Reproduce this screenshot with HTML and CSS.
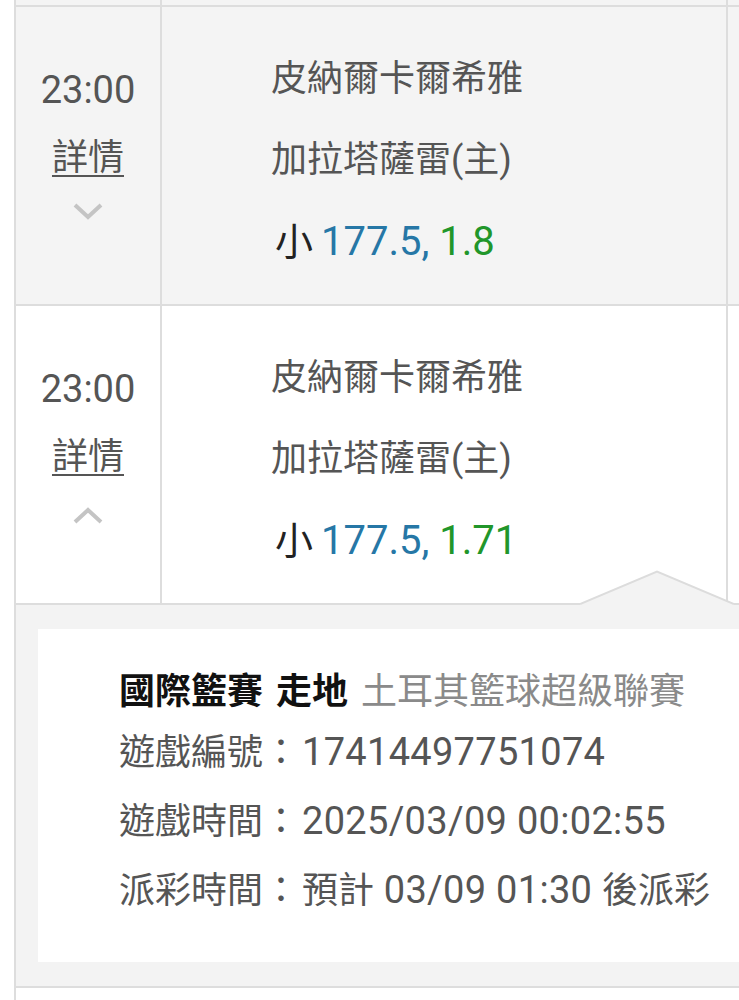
FILE: index.html
```html
<!DOCTYPE html>
<html lang="zh-Hant">
<head>
<meta charset="utf-8">
<title>注單</title>
<link rel="stylesheet" href="styles.css">
</head>
<body>
<div class="board">
  <div class="row stub">
    <div class="c time"></div><div class="c main"></div><div class="c extra"></div>
  </div>
  <div class="row alt">
    <div class="c time">
      <div class="clock">23:00</div>
      <a class="detail">詳情</a>
      <svg class="chev" width="32" height="20" viewBox="0 0 32 20"><polyline points="3,4 16,16 29,4" fill="none" stroke="#c4c4c4" stroke-width="4"/></svg>
    </div>
    <div class="c main">
      <div class="team">皮納爾卡爾希雅</div>
      <div class="team">加拉塔薩雷(主)</div>
      <div class="odds"><span class="pick">小</span><span class="n line">177.5,</span><span class="n"> </span><span class="n price">1.8</span></div>
    </div>
    <div class="c extra"></div>
  </div>
  <div class="row">
    <div class="c time">
      <div class="clock">23:00</div>
      <a class="detail">詳情</a>
      <svg class="chev up" width="32" height="20" viewBox="0 0 32 20"><polyline points="3,16 16,4 29,16" fill="none" stroke="#c4c4c4" stroke-width="4"/></svg>
    </div>
    <div class="c main">
      <div class="team">皮納爾卡爾希雅</div>
      <div class="team">加拉塔薩雷(主)</div>
      <div class="odds"><span class="pick">小</span><span class="n line">177.5,</span><span class="n"> </span><span class="n price">1.71</span></div>
    </div>
    <div class="c extra"></div>
  </div>
  <div class="panel">
    <svg class="notch" width="154" height="36" viewBox="0 0 154 36"><polygon points="0,34 77,1.5 154,34 154,36 0,36" fill="#f3f3f3"/><polyline points="0,34 77,1.5 154,34" fill="none" stroke="#dcdcdc" stroke-width="2"/></svg>
    <div class="card">
      <div class="head"><b>國際籃賽 走地</b> <span class="league">土耳其籃球超級聯賽</span></div>
      <div class="info">遊戲編號：<span class="n">17414497751074</span></div>
      <div class="info">遊戲時間：<span class="n">2025/03/09 00:02:55</span></div>
      <div class="info">派彩時間：<span class="after">預計</span><span class="n"> 03/09 01:30 </span>後派彩</div>
    </div>
  </div>
  <div class="tail"></div>
</div>
</body>
</html>
```

FILE: styles.css
```css
html, body {
  margin: 0;
  padding: 0;
  background: #ffffff;
  overflow: hidden;
}
body {
  width: 739px;
  height: 1000px;
  font-family: Roboto, "Noto Sans CJK TC", sans-serif;
  color: #555555;
}
.board {
  margin-left: 14px;
  width: 760px;
  border-left: 2px solid #dddddd;
}
.row {
  display: flex;
  height: 297px;
  border-bottom: 2px solid #dddddd;
  background: #ffffff;
}
.row.alt {
  background: #f4f4f4;
}
.row.stub {
  height: 5px;
  background: #f4f4f4;
}
.tail {
  height: 40px;
  background: #ffffff;
}
.c {
  box-sizing: border-box;
}
.time {
  width: 146px;
  border-right: 2px solid #dddddd;
  display: flex;
  flex-direction: column;
  align-items: center;
  padding-top: 49px;
}
.main {
  width: 566px;
  border-right: 2px solid #dddddd;
  padding-left: 109px;
  padding-top: 32px;
}
.extra {
  flex: 1;
}
.n {
  font-size: 38px;
}
.clock {
  font-size: 38px;
  line-height: 68px;
  color: #555555;
}
.detail {
  font-size: 36px;
  line-height: 68px;
  color: #555555;
  text-decoration: underline;
  text-decoration-thickness: 2px;
  text-underline-offset: 5px;
}
.chev {
  display: block;
  margin-top: 9px;
}
.chev.up {
  margin-top: 15px;
}
.team, .odds {
  font-size: 36px;
  line-height: 81px;
  white-space: nowrap;
}
.odds {
  font-size: 38px;
}
.odds .n {
  font-size: 40px;
}
.odds .pick {
  color: #222222;
  margin-left: 4px;
  margin-right: 8px;
}
.odds .line {
  color: #2677a6;
}
.odds .price {
  color: #21962a;
}
.panel {
  position: relative;
  background: #f3f3f3;
  padding: 24px 0 24px 22px;
  border-bottom: 2px solid #dddddd;
}
.notch {
  position: absolute;
  left: 564px;
  top: -35px;
  z-index: 2;
}
.card {
  background: #ffffff;
  padding: 37px 0 37px 81px;
}
.head {
  font-size: 36px;
  line-height: 52px;
  white-space: nowrap;
  word-spacing: 4px;
}
.head b {
  color: #111111;
  font-weight: 700;
}
.head .league {
  color: #8a8a8a;
}
.info {
  font-size: 36px;
  line-height: 68px;
  white-space: nowrap;
  color: #555555;
}
.info .n {
  letter-spacing: 0.3px;
}
.info > .n:nth-child(1),
.info .after {
  margin-left: 3px;
}
```
